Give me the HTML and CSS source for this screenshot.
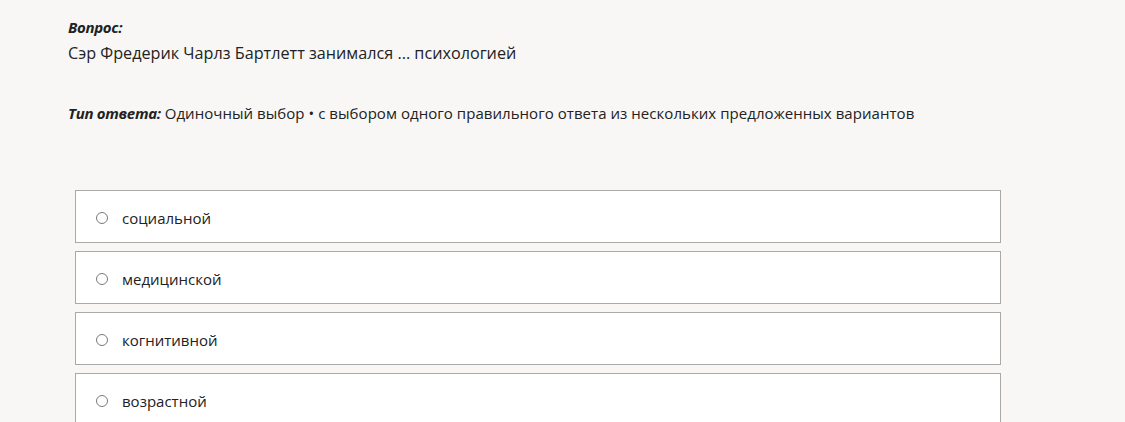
FILE: index.html
```html
<!DOCTYPE html>
<html lang="ru">
<head>
<meta charset="utf-8">
<link rel="stylesheet" href="styles.css">
</head>
<body>
<div class="page">
  <div class="question">
    <div class="label">Вопрос:</div>
    <div class="qtext">Сэр Фредерик Чарлз Бартлетт занимался ... психологией</div>
  </div>
  <div class="type"><span class="label">Тип ответа:</span> Одиночный выбор • с выбором одного правильного ответа из нескольких предложенных вариантов</div>
  <div class="options">
    <label class="option"><span class="radio"></span><span class="otext">социальной</span></label>
    <label class="option"><span class="radio"></span><span class="otext">медицинской</span></label>
    <label class="option"><span class="radio"></span><span class="otext">когнитивной</span></label>
    <label class="option"><span class="radio"></span><span class="otext">возрастной</span></label>
  </div>
</div>
</body>
</html>
```
FILE: styles.css
```css
html, body {
  margin: 0;
  padding: 0;
  background: #f8f7f5;
}
body {
  font-family: "Open Sans", "Noto Sans", sans-serif;
  color: #222;
}
.page {
  padding: 17px 0 0 68px;
}
.label {
  font-weight: 700;
  font-style: italic;
  font-size: 15px;
  letter-spacing: -0.3px;
}
.question .label {
  line-height: 20px;
}
.qtext {
  font-size: 16.2px;
  line-height: 24px;
  margin-top: 4px;
}
.type {
  margin-top: 36px;
  font-size: 15px;
  line-height: 24px;
  letter-spacing: 0.05px;
}
.options {
  margin-top: 65px;
  margin-left: 7px;
  width: 926px;
  display: flex;
  flex-direction: column;
  gap: 8px;
}
.option {
  display: flex;
  align-items: center;
  height: 53px;
  box-sizing: border-box;
  background: #fff;
  border: 1px solid #a9a9a9;
  padding: 3px 0 0 20px;
  font-size: 15px;
}
.radio {
  width: 10px;
  height: 10px;
  border: 1px solid #7a7a7a;
  border-radius: 50%;
  margin-right: 14px;
}
.otext {
  color: #222;
}
```
